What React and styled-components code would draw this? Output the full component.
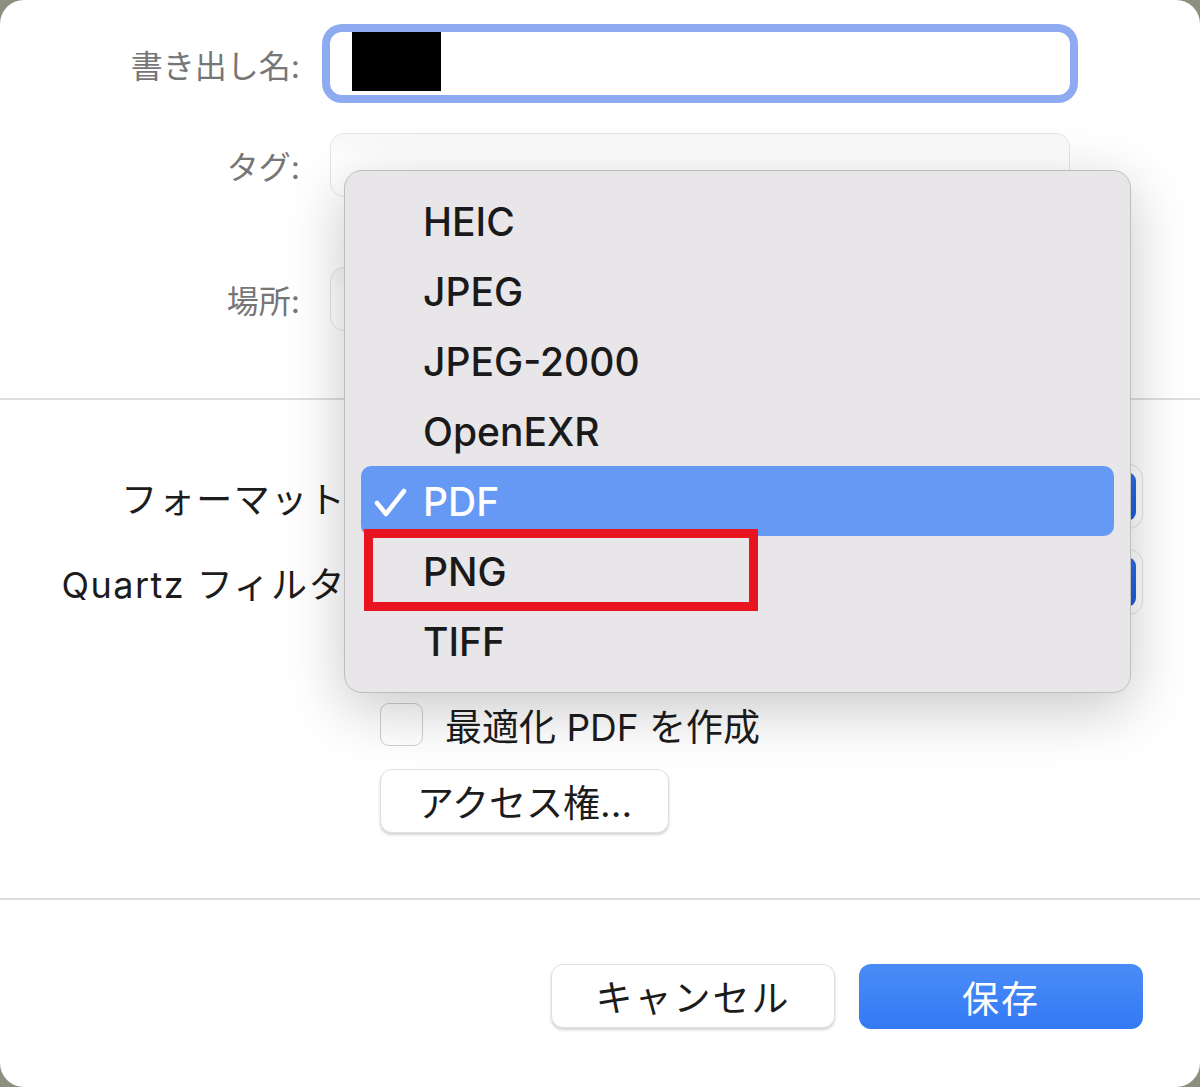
import React from 'react'
import styled, { createGlobalStyle } from 'styled-components'

const GlobalStyle = createGlobalStyle`
  html, body {
    margin: 0;
    padding: 0;
    background: #8f8f80;
  }
  * {
    box-sizing: border-box;
  }
`

const FONT = `Inter, "Noto Sans CJK JP", sans-serif`

const Dialog = styled.div`
  position: relative;
  width: 1200px;
  height: 1087px;
  background: #fff;
  border-radius: 24px;
  overflow: hidden;
  display: flex;
  flex-direction: column;
  font-family: ${FONT};
`

const TopForm = styled.div`
  display: grid;
  grid-template-columns: 300px 740px;
  column-gap: 30px;
  padding-top: 32px;
`

const Label = styled.div`
  text-align: right;
  font-size: ${(p) => (p.big ? '36px' : '32px')};
  color: ${(p) => (p.big ? '#1c1c1c' : '#767676')};
  letter-spacing: ${(p) => (p.big ? '1.5px' : '0')};
  align-self: center;
  white-space: nowrap;
`

const NameField = styled.div`
  height: 63px;
  background: #fff;
  border-radius: 12px;
  box-shadow: 0 0 0 8px #8eabf2;
  display: flex;
  align-items: stretch;
  padding: 0 0 4px 22px;
`

const Redacted = styled.div`
  width: 89px;
  background: #000;
`

const Field = styled.div`
  height: 64px;
  margin-top: ${(p) => p.top || 0}px;
  border: 1.5px solid #e6e6e6;
  border-radius: 14px;
  background: linear-gradient(#f8f8f8, #ffffff 40%);
`

const Separator = styled.div`
  height: 2px;
  background: #dedede;
  margin-top: ${(p) => p.top}px;
`

const OptionsForm = styled.div`
  display: grid;
  grid-template-columns: 358px 763px;
  column-gap: 22px;
  padding-top: 64px;
`

const Popup = styled.div`
  height: ${(p) => p.h}px;
  margin-top: ${(p) => p.top || 0}px;
  background: #fff;
  border: 1.5px solid #e2e2e2;
  border-radius: 14px;
  display: flex;
  justify-content: flex-end;
  padding: 7px 6px;
`

const PopupArrow = styled.div`
  width: 40px;
  border-radius: 9px;
  background: linear-gradient(#2a6fe6, #1a5cd6);
`

const CheckRow = styled.div`
  grid-column: 2;
  display: flex;
  align-items: center;
  gap: 22px;
  height: 43px;
  margin-top: 88px;
`

const CheckBox = styled.div`
  width: 43px;
  height: 43px;
  border: 1.5px solid #cfcfcf;
  border-radius: 9px;
  background: #fff;
`

const CheckLabel = styled.span`
  font-size: 37px;
  color: #1c1c1c;
`

const PlainButton = styled.button`
  font-family: ${FONT};
  font-size: 37px;
  color: #1c1c1c;
  background: #fff;
  border: 1px solid #e0e0e0;
  border-radius: 12px;
  box-shadow: 0 2px 3px rgba(0, 0, 0, 0.18);
  height: 64px;
  width: ${(p) => p.w}px;
  padding: 0;
  letter-spacing: ${(p) => p.spacing || 0};
`

const AccessRow = styled.div`
  grid-column: 2;
  margin-top: 23px;
`

const Footer = styled.div`
  display: flex;
  justify-content: flex-end;
  gap: 24px;
  padding: 64px 57px 0 0;
`

const PrimaryButton = styled.button`
  font-family: ${FONT};
  font-size: 37px;
  color: #fff;
  border: none;
  border-radius: 12px;
  background: linear-gradient(#4a8cf6, #3479f5);
  height: 65px;
  width: 284px;
  letter-spacing: 2px;
`

const Menu = styled.div`
  position: absolute;
  left: 344px;
  top: 170px;
  width: 787px;
  height: 523px;
  background: #e8e6e9;
  border: 1.5px solid #bdbdbd;
  border-radius: 18px;
  box-shadow: 0 16px 60px rgba(0, 0, 0, 0.22);
  padding: 16px 16px;
  display: flex;
  flex-direction: column;
`

const MenuItem = styled.div`
  position: relative;
  height: 70px;
  display: flex;
  align-items: center;
  padding-left: 62px;
  font-size: 39px;
  font-weight: 500;
  color: ${(p) => (p.selected ? '#fff' : '#1a1a1a')};
  background: ${(p) => (p.selected ? '#6699f4' : 'transparent')};
  border-radius: 10px;
`

const Check = styled.svg`
  position: absolute;
  left: 13px;
  top: 22px;
`

const Highlight = styled.div`
  position: absolute;
  left: 3px;
  top: -7px;
  width: 394px;
  height: 82px;
  border: 9px solid #e8141f;
`

const formats = ['HEIC', 'JPEG', 'JPEG-2000', 'OpenEXR', 'PDF', 'PNG', 'TIFF']

const App = () => {
  return (
    <>
      <GlobalStyle />
      <Dialog>
        <TopForm>
          <Label>書き出し名:</Label>
          <NameField>
            <Redacted />
          </NameField>
          <Label style={{ marginTop: 38 }}>タグ:</Label>
          <Field top={38} />
          <Label style={{ marginTop: 70 }}>場所:</Label>
          <Field top={70} />
        </TopForm>
        <Separator top={67} />
        <OptionsForm>
          <Label big>フォーマット:</Label>
          <Popup h={65}>
            <PopupArrow />
          </Popup>
          <Label big style={{ marginTop: 20 }}>Quartz フィルタ:</Label>
          <Popup h={66} top={20}>
            <PopupArrow />
          </Popup>
          <CheckRow>
            <CheckBox />
            <CheckLabel>最適化 PDF を作成</CheckLabel>
          </CheckRow>
          <AccessRow>
            <PlainButton w={289}>アクセス権...</PlainButton>
          </AccessRow>
        </OptionsForm>
        <Separator top={65} />
        <Footer>
          <PlainButton w={284} spacing="2px">キャンセル</PlainButton>
          <PrimaryButton>保存</PrimaryButton>
        </Footer>
        <Menu>
          {formats.map((f) => (
            <MenuItem key={f} selected={f === 'PDF'}>
              {f === 'PDF' && (
                <Check width="34" height="30" viewBox="0 0 34 30">
                  <path d="M3 15 L12 26 L30 3" fill="none" stroke="#fff" strokeWidth="4.5" strokeLinecap="round" strokeLinejoin="round" />
                </Check>
              )}
              {f}
              {f === 'PNG' && <Highlight />}
            </MenuItem>
          ))}
        </Menu>
      </Dialog>
    </>
  )
}

export default App
